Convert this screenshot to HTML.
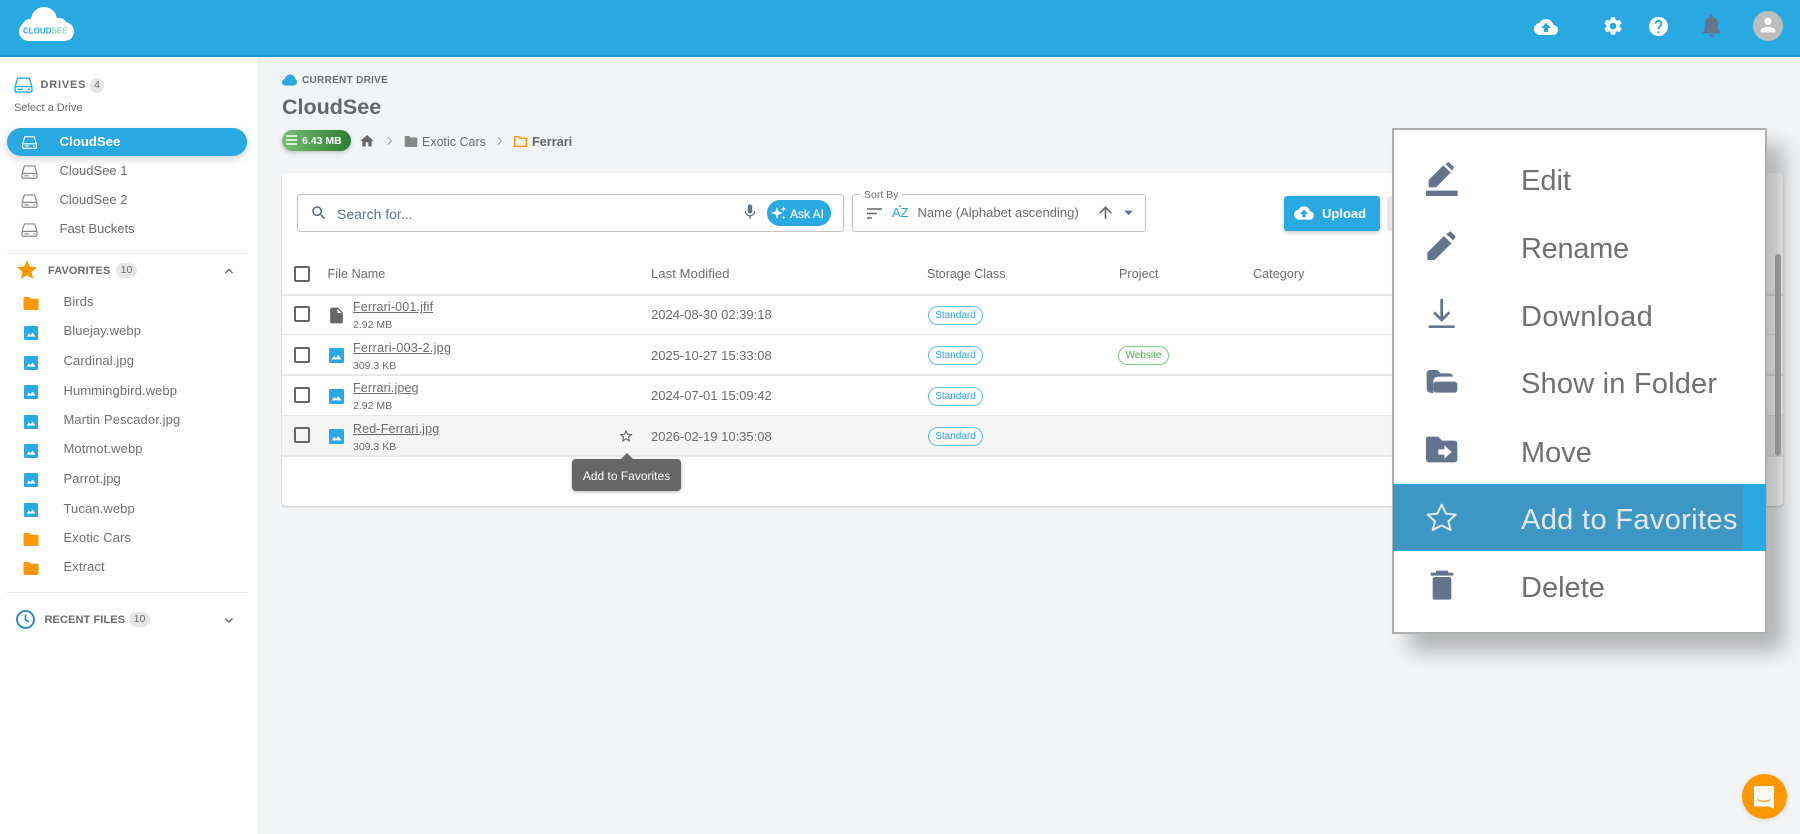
<!DOCTYPE html>
<html><head><meta charset="utf-8"><title>CloudSee</title>
<style>
*{box-sizing:border-box}
html,body{margin:0;padding:0;width:1800px;height:834px;overflow:hidden;background:#f3f4f6;font-family:"Liberation Sans",Arial,sans-serif;color:#6b6b6b}
#w{position:absolute;left:0;top:0;width:1800px;height:834px;filter:blur(.3px)}
.a{position:absolute}
.t{position:absolute;white-space:nowrap;line-height:20px;height:20px}
svg{position:absolute;display:block}
.line{position:absolute;background:#e8e8e8}
.badge{position:absolute;background:#e6e6e6;border-radius:9px;font-size:10.5px;text-align:center;color:#6b6b6b;height:15px;line-height:15px}
.cb{position:absolute;width:16px;height:16px;border:2px solid #666;border-radius:2px;left:294px}
.side{font-size:13px;left:63.5px;color:#707070;letter-spacing:.1px}
.drv{font-size:13px;left:59.5px;color:#6b6b6b}
.th{font-size:12.5px;top:264px;color:#6b6b6b;letter-spacing:.1px}
.nm{font-size:12.5px;left:353px;text-decoration:underline;color:#6b6b6b;letter-spacing:.15px}
.sz{font-size:10.5px;left:353px;color:#6b6b6b}
.dt{font-size:13px;left:651px;color:#6b6b6b}
.chip{position:absolute;height:19px;border:1px solid #60c0ee;border-radius:10px;font-size:10px;line-height:18px;text-align:center;color:#29a9e1;left:928px;width:55px;background:#fff}
.mt{position:absolute;left:1521px;font-size:29px;line-height:40px;height:40px;white-space:nowrap;color:#707070}
</style></head>
<body><div id="w">
<svg width="0" height="0" style="position:absolute"><defs>
<symbol id="img" viewBox="0 0 15 15"><rect width="15" height="15" rx="1.5" fill="#29a9e1"/><path d="M2.600 11.400l2.700-3.500 1.800 2 2.200-3 3.100 4.500z" fill="#fff"/></symbol>
<symbol id="fld" viewBox="0 0 15 13"><path d="M1.200 0h4.300l1.600 1.800h6.700c.7 0 1.200.5 1.200 1.200v8.800c0 .7-.5 1.200-1.200 1.200H1.200C.5 13 0 12.500 0 11.800V1.200C0 .5.5 0 1.200 0z" fill="#ff9800"/></symbol>
<symbol id="drv" viewBox="0 0 18 15"><path d="M1 9.200L3.500 1h11L17 9.200M2.400 9h13.200c.8 0 1.400.6 1.400 1.300v2.500c0 .8-.6 1.400-1.400 1.400H2.400c-.8 0-1.400-.6-1.400-1.400v-2.500C1 9.600 1.600 9 2.400 9z" fill="none" stroke="currentColor" stroke-width="1.300"/><path d="M3.500 11.600h5M13 11.600h2" stroke="currentColor" stroke-width="1.300"/></symbol>
</defs></svg>

<!-- header -->
<div class="a" style="left:0;top:0;width:1800px;height:57px;background:#29a9e1;border-bottom:2px solid #1f9bd4"></div>
<svg style="left:18px;top:6px" width="58" height="36" viewBox="18 6 58 36"><g fill="#fff"><rect x="19" y="22" width="55" height="19" rx="9.500"/><circle cx="44" cy="20" r="13"/><circle cx="59" cy="27" r="9"/><circle cx="30" cy="27" r="8"/></g></svg>
<svg style="left:18px;top:20px" width="58" height="20" viewBox="0 0 58 20"><text x="5" y="13.500" font-family="Liberation Sans" font-weight="700" font-size="8"><tspan fill="#29a9e1">CLOUD</tspan><tspan fill="#8fd8a8">SEE</tspan></text></svg>

<svg style="left:1534px;top:15px" width="24" height="24" viewBox="0 0 24 24"><path fill="#fff" d="M19.350 10.040C18.670 6.590 15.640 4 12 4 9.110 4 6.600 5.640 5.350 8.040 2.340 8.360 0 10.910 0 14c0 3.310 2.690 6 6 6h13c2.760 0 5-2.240 5-5 0-2.640-2.050-4.780-4.650-4.960zM14 13v4h-4v-4H7l5-5 5 5h-3z"/></svg>
<svg style="left:1602px;top:15px" width="22" height="22" viewBox="0 0 24 24"><path fill="#fff" d="M19.140 12.940c.04-.3.06-.61.06-.94 0-.32-.02-.64-.07-.94l2.030-1.580c.18-.14.23-.41.12-.61l-1.920-3.320c-.12-.22-.37-.29-.59-.22l-2.390.96c-.5-.38-1.030-.7-1.620-.94l-.36-2.540c-.04-.24-.24-.41-.48-.41h-3.840c-.24 0-.43.17-.47.41l-.36 2.540c-.59.24-1.130.57-1.620.94l-2.390-.96c-.22-.08-.47 0-.59.22L2.740 8.870c-.12.21-.08.47.12.61l2.030 1.580c-.05.3-.09.63-.09.94s.02.64.07.94l-2.030 1.580c-.18.14-.23.41-.12.61l1.920 3.320c.12.22.37.29.59.22l2.390-.96c.5.38 1.030.7 1.620.94l.36 2.540c.05.24.24.41.48.41h3.840c.24 0 .44-.17.47-.41l.36-2.540c.59-.24 1.130-.56 1.620-.94l2.390.96c.22.08.47 0 .59-.22l1.920-3.320c.12-.22.07-.47-.12-.61l-2.010-1.580zM12 15.600c-1.980 0-3.600-1.620-3.600-3.600s1.620-3.600 3.600-3.600 3.600 1.620 3.600 3.600-1.620 3.600-3.600 3.600z"/></svg>
<svg style="left:1647px;top:15px" width="23" height="23" viewBox="0 0 24 24"><path fill="#fff" d="M12 2C6.480 2 2 6.480 2 12s4.480 10 10 10 10-4.480 10-10S17.520 2 12 2zm1 17h-2v-2h2v2zm2.070-7.750l-.9.92C13.450 12.900 13 13.500 13 15h-2v-.5c0-1.100.45-2.100 1.170-2.830l1.240-1.260c.37-.36.59-.86.59-1.410 0-1.100-.9-2-2-2s-2 .9-2 2H8c0-2.210 1.790-4 4-4s4 1.790 4 4c0 .88-.36 1.680-.93 2.250z"/></svg>
<svg style="left:1698px;top:12px" width="27" height="27" viewBox="0 0 24 24"><path fill="#64748b" d="M12 22c1.100 0 2-.9 2-2h-4c0 1.100.89 2 2 2zm6-6v-5c0-3.070-1.640-5.640-4.500-6.320V4c0-.83-.67-1.500-1.500-1.500s-1.500.67-1.500 1.500v.68C7.630 5.360 6 7.920 6 11v5l-2 2v1h16v-1l-2-2z"/></svg>
<div class="a" style="left:1753px;top:11px;width:30px;height:30px;border-radius:50%;background:#bdbdbd"></div>
<svg style="left:1757px;top:14px" width="22" height="22" viewBox="0 0 24 24"><path fill="#fff" d="M12 12c2.210 0 4-1.790 4-4s-1.790-4-4-4-4 1.790-4 4 1.790 4 4 4zm0 2c-2.670 0-8 1.340-8 4v2h16v-2c0-2.660-5.330-4-8-4z"/></svg>

<!-- sidebar -->
<div class="a" style="left:0;top:57px;width:260px;height:777px;background:#fff;border-right:2px solid #eceef1"></div>
<svg style="left:14px;top:77px;color:#29a9e1" width="19" height="16"><use href="#drv"/></svg>
<div class="t" style="left:40.5px;top:75px;font-size:11px;font-weight:700;letter-spacing:.8px;color:#6b6b6b">DRIVES</div>
<div class="badge" style="left:90px;top:78px;width:14px">4</div>
<div class="t" style="left:14px;top:98px;font-size:11px;color:#6b6b6b">Select a Drive</div>

<div class="a" style="left:7px;top:128px;width:240px;height:28px;border-radius:14px;background:#29a9e1;box-shadow:0 3px 8px rgba(0,0,0,.18)"></div>
<svg style="left:21px;top:136px;color:#fff" width="17" height="13"><use href="#drv"/></svg>
<div class="t drv" style="top:132px;color:#fff;font-weight:700;font-size:13.2px">CloudSee</div>
<svg style="left:21px;top:165px;color:#888" width="17" height="14"><use href="#drv"/></svg>
<div class="t drv" style="top:161px">CloudSee 1</div>
<svg style="left:21px;top:194px;color:#888" width="17" height="14"><use href="#drv"/></svg>
<div class="t drv" style="top:190px">CloudSee 2</div>
<svg style="left:21px;top:223px;color:#888" width="17" height="14"><use href="#drv"/></svg>
<div class="t drv" style="top:219px">Fast Buckets</div>
<div class="line" style="left:7px;top:253px;width:240px;height:1px"></div>

<svg style="left:15px;top:258px" width="24" height="24" viewBox="0 0 24 24"><path fill="#ff9800" d="M12 17.270L18.180 21l-1.640-7.030L22 9.240l-7.190-.61L12 2 9.190 8.630 2 9.240l5.460 4.730L5.820 21z"/></svg>
<div class="t" style="left:48px;top:261px;font-size:11px;font-weight:700;letter-spacing:.1px;color:#6b6b6b">FAVORITES</div>
<div class="badge" style="left:116px;top:263px;width:21px">10</div>
<svg style="left:223px;top:265px" width="12" height="12" viewBox="0 0 12 12"><path d="M2.500 8L6 4.500 9.500 8" fill="none" stroke="#666" stroke-width="1.400"/></svg>

<svg style="left:23px;top:297px" width="16" height="13"><use href="#fld"/></svg><div class="t side" style="top:292px">Birds</div>
<svg style="left:24px;top:326px" width="14" height="14"><use href="#img"/></svg><div class="t side" style="top:321px">Bluejay.webp</div>
<svg style="left:24px;top:356px" width="14" height="14"><use href="#img"/></svg><div class="t side" style="top:351px">Cardinal.jpg</div>
<svg style="left:24px;top:385px" width="14" height="14"><use href="#img"/></svg><div class="t side" style="top:381px">Hummingbird.webp</div>
<svg style="left:24px;top:415px" width="14" height="14"><use href="#img"/></svg><div class="t side" style="top:410px">Martin Pescador.jpg</div>
<svg style="left:24px;top:444px" width="14" height="14"><use href="#img"/></svg><div class="t side" style="top:439px">Motmot.webp</div>
<svg style="left:24px;top:473px" width="14" height="14"><use href="#img"/></svg><div class="t side" style="top:469px">Parrot.jpg</div>
<svg style="left:24px;top:503px" width="14" height="14"><use href="#img"/></svg><div class="t side" style="top:499px">Tucan.webp</div>
<svg style="left:23px;top:533px" width="16" height="13"><use href="#fld"/></svg><div class="t side" style="top:528px">Exotic Cars</div>
<svg style="left:23px;top:562px" width="16" height="13"><use href="#fld"/></svg><div class="t side" style="top:557px">Extract</div>
<div class="line" style="left:7px;top:592px;width:240px;height:1px"></div>

<svg style="left:16px;top:610px" width="19" height="19" viewBox="0 0 19 19"><circle cx="9.500" cy="9.500" r="8.500" fill="none" stroke="#1a86c8" stroke-width="1.800"/><path d="M9.500 4.500v5.300l3.500 2.200" fill="none" stroke="#1a86c8" stroke-width="1.600"/></svg>
<div class="t" style="left:44.5px;top:610px;font-size:11px;font-weight:700;letter-spacing:.1px;color:#6b6b6b">RECENT FILES</div>
<div class="badge" style="left:129px;top:612px;width:21px">10</div>
<svg style="left:223px;top:614px" width="12" height="12" viewBox="0 0 12 12"><path d="M2.500 4.500L6 8l3.500-3.500" fill="none" stroke="#666" stroke-width="1.400"/></svg>

<!-- main header -->
<svg style="left:282px;top:74px" width="15" height="12" viewBox="0 0 15 12"><path fill="#29a9e1" d="M3.500 11.500C1.500 11.500 0 10 0 8.200 0 6.500 1.200 5.200 2.800 5 3.500 2.500 5.500.5 8 .5c2.800 0 4.800 2 5.200 4.500 1 .4 1.800 1.500 1.800 3 0 2-1.500 3.500-3.500 3.500z"/></svg>
<div class="t" style="left:302px;top:71px;font-size:10px;font-weight:700;letter-spacing:.3px;color:#6b6b6b">CURRENT DRIVE</div>
<div class="t" style="left:282px;top:97px;font-size:21.5px;font-weight:700;color:#666">CloudSee</div>
<div class="a" style="left:282px;top:130px;width:69px;height:21px;border-radius:11px;background:linear-gradient(90deg,#72c072,#2e7d32);box-shadow:0 2px 4px rgba(0,0,0,.2)"></div>
<svg style="left:286px;top:135px" width="11" height="10" viewBox="0 0 11 10"><path d="M0 1h11M0 5h11M0 9h11" stroke="#fff" stroke-width="1.600"/></svg>
<div class="t" style="left:302px;top:131px;font-size:10.5px;font-weight:700;color:#fff">6.43 MB</div>
<svg style="left:359px;top:133px" width="16" height="16" viewBox="0 0 24 24"><path fill="#666" d="M10 20v-6h4v6h5v-8h3L12 3 2 12h3v8z"/></svg>
<svg style="left:385px;top:136px" width="10" height="10" viewBox="0 0 10 10"><path d="M3 1.500L6.500 5 3 8.500" fill="none" stroke="#999" stroke-width=".9"/></svg>
<svg style="left:404px;top:136px" width="14" height="11" viewBox="0 0 15 13"><path d="M1.200 0h4.300l1.600 1.800h6.700c.7 0 1.200.5 1.200 1.200v8.800c0 .7-.5 1.200-1.200 1.200H1.200C.5 13 0 12.500 0 11.800V1.200C0 .5.5 0 1.200 0z" fill="#888"/></svg>
<div class="t" style="left:422px;top:132px;font-size:12.5px;color:#6b6b6b">Exotic Cars</div>
<svg style="left:495px;top:136px" width="10" height="10" viewBox="0 0 10 10"><path d="M3 1.500L6.500 5 3 8.500" fill="none" stroke="#999" stroke-width=".9"/></svg>
<svg style="left:514px;top:136px" width="13" height="11" viewBox="0 0 13 11"><path d="M.7.700h4l1.300 1.500h6.300v8.100H.7z" fill="none" stroke="#ff9800" stroke-width="1.400"/></svg>
<div class="t" style="left:532px;top:132px;font-size:12.7px;font-weight:700;color:#666">Ferrari</div>

<!-- card -->
<div class="a" style="left:282px;top:173px;width:1501px;height:333px;background:#fff;border-radius:4px;box-shadow:0 1px 2px rgba(0,0,0,.2)"></div>

<!-- search -->
<div class="a" style="left:297px;top:194px;width:547px;height:38px;border:1px solid #c4c4c4;border-radius:3px;background:#fff"></div>
<svg style="left:310px;top:204px" width="18" height="18" viewBox="0 0 24 24"><path fill="#5a6a80" d="M15.500 14h-.79l-.28-.27C15.410 12.590 16 11.110 16 9.500 16 5.910 13.090 3 9.500 3S3 5.910 3 9.500 5.910 16 9.500 16c1.610 0 3.090-.59 4.230-1.570l.27.28v.79l5 4.990L20.490 19l-4.990-5zm-6 0C7.010 14 5 11.990 5 9.500S7.010 5 9.500 5 14 7.010 14 9.500 11.990 14 9.500 14z"/></svg>
<div class="t" style="left:337px;top:204px;font-size:14px;color:#5f6f85">Search for...</div>
<svg style="left:741px;top:203px" width="18" height="18" viewBox="0 0 24 24"><path fill="#5f6f85" d="M12 14c1.660 0 3-1.340 3-3V5c0-1.660-1.340-3-3-3S9 3.340 9 5v6c0 1.660 1.340 3 3 3zm5.300-3c0 3-2.540 5.100-5.300 5.100S6.700 14 6.700 11H5c0 3.410 2.720 6.230 6 6.720V21h2v-3.280c3.280-.48 6-3.300 6-6.720h-1.700z"/></svg>
<div class="a" style="left:767px;top:200px;width:64px;height:26px;border-radius:13px;background:#29a9e1"></div>
<svg style="left:771px;top:205px" width="16" height="16" viewBox="0 0 16 16"><path fill="#fff" d="M6 2l1.500 4.500L12 8 7.500 9.500 6 14 4.500 9.500 0 8l4.500-1.500zM12.500 1l.8 2.200 2.200.8-2.200.8-.8 2.200-.8-2.200L9.500 4l2.200-.8zM12.500 10.500l.6 1.400 1.400.6-1.400.6-.6 1.400-.6-1.400-1.400-.6 1.400-.6z"/></svg>
<div class="t" style="left:790px;top:204px;font-size:12px;color:#fff;-webkit-text-stroke:.2px #fff">Ask AI</div>

<!-- sort -->
<div class="a" style="left:852px;top:194px;width:294px;height:38px;border:1px solid #c4c4c4;border-radius:3px;background:#fff"></div>
<div class="t" style="left:860px;top:185px;padding:0 4px;background:#fff;font-size:10.5px;color:#6b6b6b;height:16px;line-height:20px">Sort By</div>
<svg style="left:867px;top:208px" width="15" height="11" viewBox="0 0 15 11"><path d="M0 1h15M0 5.500h10M0 10h5" stroke="#666" stroke-width="1.500"/></svg>
<div class="t" style="left:892px;top:203px;font-size:13px;color:#29a9e1">AZ</div>
<div class="a" style="left:899px;top:205px;width:2px;height:2px;border-radius:50%;background:#29a9e1"></div>
<div class="t" style="left:917.5px;top:203px;font-size:13px;color:#6b6b6b">Name (Alphabet ascending)</div>
<svg style="left:1096px;top:203px" width="19" height="19" viewBox="0 0 24 24"><path fill="#666" d="M4 12l1.410 1.410L11 7.830V20h2V7.830l5.580 5.590L20 12l-8-8-8 8z"/></svg>
<svg style="left:1118px;top:202px" width="21" height="21" viewBox="0 0 24 24"><path fill="#5f6f85" d="M7 10l5 5 5-5z"/></svg>

<!-- buttons -->
<div class="a" style="left:1284px;top:196px;width:96px;height:35px;border-radius:3px;background:#29a9e1;box-shadow:0 2px 4px rgba(0,0,0,.2)"></div>
<svg style="left:1294px;top:203px" width="20" height="20" viewBox="0 0 24 24"><path fill="#fff" d="M19.350 10.040C18.670 6.590 15.640 4 12 4 9.110 4 6.600 5.640 5.350 8.040 2.340 8.360 0 10.910 0 14c0 3.310 2.690 6 6 6h13c2.760 0 5-2.240 5-5 0-2.640-2.050-4.780-4.650-4.960zM14 13v4h-4v-4H7l5-5 5 5h-3z"/></svg>
<div class="t" style="left:1322px;top:204px;font-size:13px;font-weight:700;color:#fff">Upload</div>
<div class="a" style="left:1387px;top:196px;width:30px;height:35px;border-radius:3px;background:#e8e8e8"></div>

<!-- table -->
<div class="cb" style="top:266px"></div>
<div class="t th" style="left:327.5px">File Name</div>
<div class="t th" style="left:651px;font-size:13px">Last Modified</div>
<div class="t th" style="left:927px;letter-spacing:0">Storage Class</div>
<div class="t th" style="left:1119px">Project</div>
<div class="t th" style="left:1253px">Category</div>

<div class="a" style="left:282px;top:415px;width:1501px;height:41px;background:#f5f5f5"></div>
<div class="line" style="left:282px;top:294px;width:1501px;height:2px"></div>
<div class="line" style="left:282px;top:334px;width:1501px;height:1px"></div>
<div class="line" style="left:282px;top:374px;width:1501px;height:2px"></div>
<div class="line" style="left:282px;top:415px;width:1501px;height:1px"></div>
<div class="line" style="left:282px;top:455px;width:1501px;height:2px"></div>

<div class="cb" style="top:306px"></div>
<svg style="left:327px;top:306px" width="19" height="19" viewBox="0 0 24 24"><path fill="#666" d="M14 2H6c-1.100 0-1.990.9-1.990 2L4 20c0 1.100.89 2 1.990 2H18c1.100 0 2-.9 2-2V8l-6-6zm-1 7V3.500L18.500 9H13z"/></svg>
<div class="t nm" style="top:297px">Ferrari-001.jfif</div>
<div class="t sz" style="top:315px">2.92 MB</div>
<div class="t dt" style="top:305px">2024-08-30 02:39:18</div>
<div class="chip" style="top:306px">Standard</div>

<div class="cb" style="top:347px"></div>
<svg style="left:329px;top:348px" width="15" height="15"><use href="#img"/></svg>
<div class="t nm" style="top:338px;letter-spacing:.3px">Ferrari-003-2.jpg</div>
<div class="t sz" style="top:356px">309.3 KB</div>
<div class="t dt" style="top:346px">2025-10-27 15:33:08</div>
<div class="chip" style="top:346px">Standard</div>
<div class="chip" style="top:346px;left:1118px;width:51px;border-color:#7fcf85;color:#4caf50">Website</div>

<div class="cb" style="top:387px"></div>
<svg style="left:329px;top:389px" width="15" height="15"><use href="#img"/></svg>
<div class="t nm" style="top:378px">Ferrari.jpeg</div>
<div class="t sz" style="top:396px">2.92 MB</div>
<div class="t dt" style="top:386px">2024-07-01 15:09:42</div>
<div class="chip" style="top:387px">Standard</div>

<div class="cb" style="top:427px"></div>
<svg style="left:329px;top:429px" width="15" height="15"><use href="#img"/></svg>
<div class="t nm" style="top:419px">Red-Ferrari.jpg</div>
<div class="t sz" style="top:437px">309.3 KB</div>
<svg style="left:618px;top:428px" width="16" height="16" viewBox="0 0 24 24"><path fill="#666" d="M22 9.240l-7.190-.62L12 2 9.190 8.630 2 9.240l5.460 4.730L5.820 21 12 17.270 18.180 21l-1.630-7.030L22 9.240zM12 15.400l-3.760 2.270 1-4.280-3.320-2.880 4.380-.38L12 6.100l1.710 4.040 4.380.38-3.320 2.880 1 4.280L12 15.400z"/></svg>
<div class="t dt" style="top:427px">2026-02-19 10:35:08</div>
<div class="chip" style="top:427px;background:#f5f5f5">Standard</div>

<!-- tooltip -->
<div class="a" style="left:572px;top:459px;width:109px;height:32px;border-radius:4px;background:#666;box-shadow:0 1px 3px rgba(0,0,0,.3);text-align:center;color:#fff;font-size:12px;line-height:35px">Add to Favorites</div>
<div class="a" style="left:621px;top:453px;width:0;height:0;border-left:6px solid transparent;border-right:6px solid transparent;border-bottom:6px solid #666"></div>

<!-- far right -->
<div class="a" style="left:1775px;top:254px;width:6px;height:202px;border-radius:3px;background:#b5b5b5"></div>

<!-- context menu -->
<div class="a" style="left:1392px;top:128px;width:375px;height:506px;background:#fff;border:2px solid #b0b0b0;box-shadow:17px 17px 20px rgba(0,0,0,.27)"></div>
<div class="a" style="left:1393px;top:484px;width:373px;height:67px;background:#29a9e1"></div>
<div class="a" style="left:1393px;top:485px;width:350px;height:65px;background:#3d97c2"></div>

<!-- upper menu icons: drawn in 3x crop coordinates -->
<svg style="left:1370px;top:110px" width="430" height="300" viewBox="0 0 1290 900">
<g fill="#64748f">
<path d="M176 232V210L220 166 242 188 198 232z"/><path d="M226 162L236 156 252 172 246 182z"/><rect x="168" y="242" width="95" height="16" rx="2"/>
<path d="M172 450V428L222 378 244 400 194 450z"/><path d="M228 372L242 364 257 379 250 392z"/>
<path d="M170 792q0-12 12-12h20l10 10h26q9 0 11 10h-42q-17 0-17 17v32q-20 0-20-14z"/><rect x="190" y="815" width="72" height="33" rx="8"/>
</g>
<path d="M215 567V628M192 607L215 630 238 607" fill="none" stroke="#64748f" stroke-width="8"/><path d="M176 650H254" stroke="#64748f" stroke-width="8"/>
</svg>
<div class="mt" style="top:161px">Edit</div>
<div class="mt" style="top:229px;letter-spacing:-.3px">Rename</div>
<div class="mt" style="top:297px;letter-spacing:.4px">Download</div>
<div class="mt" style="top:364px;letter-spacing:.2px">Show in Folder</div>
<!-- lower menu icons -->
<svg style="left:1370px;top:400px" width="430" height="280" viewBox="0 0 1290 840">
<path fill="#64748f" d="M176 110h28l12 12h38q8 0 8 10v45q0 10-10 10H178q-10 0-10-10V118q0-8 8-8z"/>
<path fill="#fff" d="M205 148h18v-12l22 20-22 20v-12h-18z"/>
<path d="M215 314L228 341 257 344 235 364 242 390 215 376 188 390 195 364 173 344 202 341z" fill="none" stroke="#dfeaf0" stroke-width="6" stroke-linejoin="round"/>
<g fill="#64748f"><rect x="182" y="518" width="68" height="9" rx="2"/><rect x="198" y="512" width="36" height="8" rx="2"/><rect x="188" y="531" width="56" height="68" rx="7"/></g>
</svg>
<div class="mt" style="top:433px">Move</div>
<div class="mt" style="top:500px;color:#e4e8ea;letter-spacing:.35px">Add to Favorites</div>
<div class="mt" style="top:568px">Delete</div>

<!-- chat -->
<div class="a" style="left:1742px;top:774px;width:45px;height:45px;border-radius:50%;background:#ff9800;box-shadow:0 1px 6px rgba(0,0,0,.1)"></div>
<svg style="left:1754px;top:786px" width="21" height="23" viewBox="0 0 21 23"><path fill="#fff" d="M2 0h16a2 2 0 0 1 2 2v21l-5-2.500H2a2 2 0 0 1-2-2V2a2 2 0 0 1 2-2z"/><path d="M3.500 13.500c4 2.500 9 2.500 13 0" fill="none" stroke="#ff9800" stroke-width="1.200"/></svg>
</div></body></html>
